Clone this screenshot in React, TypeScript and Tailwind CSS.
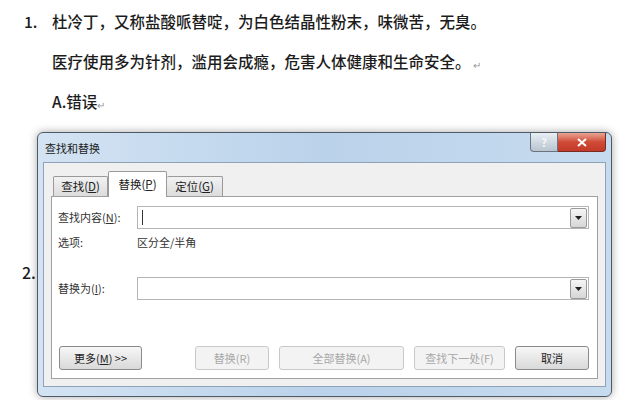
import React from 'react';

const cjk = { fontFamily: '"Noto Sans CJK SC", "Noto Sans", sans-serif' };

const Caret = () => (
  <div className="w-[17px] h-[20px] mr-[1px] border border-[#9a9a9a] rounded-[2px] bg-gradient-to-b from-[#f6f6f6] to-[#d6d6d6] flex items-center justify-center">
    <svg width="7" height="4" viewBox="0 0 7 4">
      <path d="M0 0 L7 0 L3.5 4 Z" fill="#222" />
    </svg>
  </div>
);

const Combo: React.FC<{ cursor?: boolean }> = ({ cursor }) => (
  <div className="flex-1 h-[23px] border border-[#b5b5b5] bg-white flex items-center justify-between">
    <div className="pl-[4px] h-full flex items-center">
      {cursor && <div className="w-px h-[15px] bg-[#333]" />}
    </div>
    <Caret />
  </div>
);

const Btn: React.FC<{ label: React.ReactNode; w: string; disabled?: boolean }> = ({ label, w, disabled }) => (
  <div
    className={`${w} h-[24px] rounded-[3px] flex items-center justify-center text-[11px] ${
      disabled
        ? 'border border-[#c9c9c9] bg-[#f3f3f3] text-[#a8a8a8]'
        : 'border border-[#8a8a8a] bg-gradient-to-b from-[#f7f7f7] to-[#d9d9d9] text-[#222]'
    }`}
  >
    {label}
  </div>
);

export default function App() {
  return (
    <div className="w-[620px] h-[400px] overflow-hidden bg-white text-[#1c1c1c]" style={cjk}>
      <div className="pt-[2px] text-[15.5px] font-medium">
        <div className="flex h-[40px] items-center">
          <span className="w-[52px] pl-[24px]">1.</span>
          <span>杜冷丁，又称盐酸哌替啶，为白色结晶性粉末，味微苦，无臭。</span>
        </div>
        <div className="flex h-[40px] items-center pl-[52px]">
          <span>医疗使用多为针剂，滥用会成瘾，危害人体健康和生命安全。</span>
          <span className="text-[10px] text-[#999] ml-[2px] mt-[4px]">↵</span>
        </div>
        <div className="flex h-[40px] items-center pl-[52px]">
          <span>A.错误</span>
          <span className="text-[10px] text-[#999] mt-[4px]">↵</span>
        </div>
      </div>

      <div className="relative mt-[10px]">
        <span className="absolute left-[22px] top-[128px] text-[16px] font-medium">2.</span>

        {/* dialog window */}
        <div className="relative ml-[37px] w-[575px] h-[265px] rounded-[6px] border border-[#4e5a66] bg-gradient-to-r from-[#d3e3f3] via-[#bad2ea] to-[#c7dbef] shadow-[0_0_8px_rgba(0,0,0,0.35)] flex flex-col">
          <div className="h-[29px] flex items-start justify-between">
            <span className="pl-[7px] pt-[7px] text-[11px] text-[#222]">查找和替换</span>
            <div className="flex mr-[5px]">
              <div className="w-[28px] h-[19px] rounded-bl-[4px] border border-[#6a7480] border-t-0 bg-gradient-to-b from-[#e8eef4] to-[#b9c4cf] flex items-center justify-center text-[11px] font-bold text-[#f4f6f8]">
                ?
              </div>
              <div className="w-[48px] h-[19px] rounded-br-[4px] border border-[#7a2a22] border-t-0 border-l-0 bg-gradient-to-b from-[#e8a393] via-[#cf4a37] to-[#c23a28] flex items-center justify-center">
                <svg width="10" height="9" viewBox="0 0 10 9">
                  <path d="M1 1 L9 8 M9 1 L1 8" stroke="#fff" strokeWidth="2" />
                </svg>
              </div>
            </div>
          </div>

          <div className="mx-[5px] mb-[9px] flex-1 bg-[#f0f0f0] border border-[#8ea2b8] px-[7px] pt-[7px] pb-[7px] flex flex-col">
            {/* tabs */}
            <div className="flex items-end h-[26px] pl-[2px] text-[11.5px] text-[#222]">
              <div className="w-[55px] h-[20px] border border-[#9a9a9a] border-b-0 rounded-t-[2px] bg-gradient-to-b from-[#f2f2f2] to-[#dcdcdc] flex items-center justify-center">
                查找(<span className="underline">D</span>)
              </div>
              <div className="w-[59px] h-[26px] border border-[#9a9a9a] border-b-0 rounded-t-[2px] bg-white flex items-center justify-center -mb-px relative z-10">
                替换(<span className="underline">P</span>)
              </div>
              <div className="w-[56px] h-[20px] border border-[#9a9a9a] border-b-0 border-l-0 rounded-t-[2px] bg-gradient-to-b from-[#f2f2f2] to-[#dcdcdc] flex items-center justify-center">
                定位(<span className="underline">G</span>)
              </div>
            </div>

            {/* panel */}
            <div className="flex-1 bg-white border border-[#a0a0a0] pl-[6px] pr-[8px] pt-[9px] pb-[8px] flex flex-col text-[11px] text-[#333]">
              <div className="flex items-center">
                <span className="w-[79px]">
                  查找内容(<span className="underline">N</span>):
                </span>
                <Combo cursor />
              </div>
              <div className="flex items-center mt-[5px] h-[16px]">
                <span className="w-[79px]">选项:</span>
                <span>区分全/半角</span>
              </div>
              <div className="flex items-center mt-[27px]">
                <span className="w-[79px]">
                  替换为(<span className="underline">I</span>):
                </span>
                <Combo />
              </div>
              <div className="flex-1" />
              <div className="flex items-center">
                <div className="ml-[1px]">
                  <Btn
                    w="w-[83px]"
                    label={
                      <span>
                        更多(<span className="underline">M</span>) &gt;&gt;
                      </span>
                    }
                  />
                </div>
                <div className="ml-[53px]">
                  <Btn w="w-[74px]" disabled label="替换(R)" />
                </div>
                <div className="ml-[10px]">
                  <Btn w="w-[125px]" disabled label="全部替换(A)" />
                </div>
                <div className="ml-[10px]">
                  <Btn w="w-[91px]" disabled label="查找下一处(F)" />
                </div>
                <div className="ml-[10px]">
                  <Btn w="w-[74px]" label="取消" />
                </div>
              </div>
            </div>
          </div>
        </div>
      </div>
    </div>
  );
}
